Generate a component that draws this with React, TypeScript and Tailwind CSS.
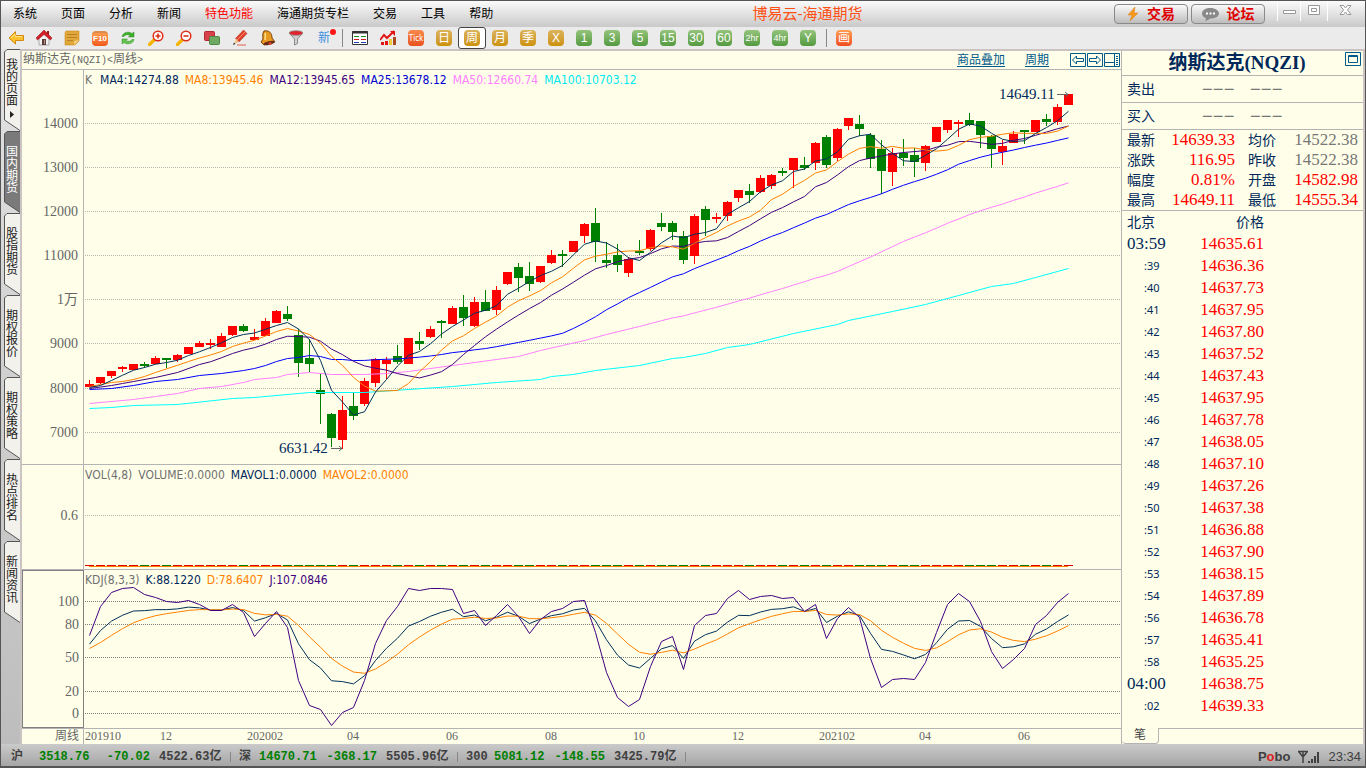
import React from "react"
import clsx from "clsx"

const BAR_STEP = 11
const FIRST_BAR = 5

type Candle = [string, number, number, number, number]
type Point = [number, number]

// direction, body top, body bottom, wick top, wick bottom
const candles: Candle[] = [
  ["u", 384, 387, 380, 387], ["u", 377, 383, 377, 384], ["u", 371, 376, 371, 378], ["u", 367, 369, 366, 372],
  ["u", 364, 370, 364, 370], ["d", 364, 366, 362, 368], ["u", 358, 364, 356, 364], ["d", 358, 360, 358, 368],
  ["u", 355, 360, 354, 362], ["u", 347, 354, 347, 354], ["u", 343, 347, 341, 347], ["u", 343, 344, 339, 349],
  ["u", 336, 347, 333, 347], ["u", 326, 335, 326, 336], ["d", 326, 331, 324, 332], ["u", 337, 340, 329, 340],
  ["u", 321, 336, 318, 336], ["u", 311, 323, 310, 323], ["d", 314, 319, 306, 321], ["d", 335, 363, 329, 377],
  ["d", 358, 364, 339, 372], ["d", 390, 394, 373, 424], ["d", 414, 438, 413, 447], ["u", 410, 440, 396, 449],
  ["d", 406, 416, 393, 420], ["u", 381, 404, 378, 406], ["u", 359, 383, 358, 387], ["u", 360, 364, 357, 379],
  ["d", 356, 362, 345, 364], ["u", 338, 364, 338, 364], ["d", 341, 344, 332, 350], ["u", 329, 337, 326, 338],
  ["d", 321, 323, 320, 338], ["u", 308, 324, 306, 324], ["d", 307, 318, 295, 326], ["u", 302, 326, 297, 327],
  ["d", 302, 311, 290, 311], ["u", 290, 310, 286, 315], ["u", 272, 284, 272, 285], ["d", 267, 278, 263, 292],
  ["d", 276, 284, 262, 291], ["u", 266, 282, 266, 283], ["u", 255, 263, 250, 264], ["d", 254, 255, 250, 267],
  ["u", 241, 252, 241, 252], ["u", 224, 236, 223, 243], ["d", 223, 242, 208, 262], ["d", 260, 263, 242, 268],
  ["d", 255, 265, 244, 272], ["u", 259, 273, 257, 277], ["d", 251, 253, 240, 255], ["u", 230, 249, 229, 251],
  ["d", 223, 227, 213, 231], ["d", 223, 232, 221, 240], ["d", 236, 260, 231, 264], ["u", 216, 256, 214, 264],
  ["d", 209, 220, 206, 236], ["u", 217, 219, 213, 223], ["u", 202, 216, 201, 221], ["u", 190, 198, 190, 202],
  ["d", 191, 195, 184, 203], ["u", 178, 192, 175, 193], ["u", 175, 186, 174, 189], ["d", 171, 173, 168, 176],
  ["u", 158, 170, 158, 188], ["d", 165, 168, 157, 170], ["u", 143, 163, 142, 170], ["d", 137, 165, 135, 168],
  ["u", 129, 158, 128, 161], ["u", 118, 126, 118, 130], ["d", 124, 129, 115, 136], ["d", 135, 159, 133, 168],
  ["d", 149, 171, 140, 194], ["u", 153, 172, 148, 186], ["d", 153, 158, 139, 166], ["d", 155, 162, 148, 177],
  ["u", 146, 163, 145, 171], ["u", 127, 142, 127, 142], ["u", 120, 130, 120, 133], ["u", 122, 124, 120, 137],
  ["d", 120, 125, 113, 126], ["d", 121, 135, 121, 148], ["d", 136, 149, 135, 168], ["u", 146, 152, 140, 165],
  ["u", 134, 143, 131, 143], ["d", 130, 132, 130, 144], ["u", 120, 132, 120, 132], ["d", 119, 122, 114, 126],
  ["u", 107, 122, 104, 125], ["u", 94, 105, 94, 105],
]

const ma4Lead: Point[] = [[0, 387], [1, 385], [2, 380]]
const ma8Lead: Point[] = [[0, 386], [1, 384], [2, 382], [3, 381], [4, 379], [5, 376], [6, 372]]
const ma12Lead: Point[] = [[0, 388], [2, 385], [3, 383], [4, 381], [6, 377], [8, 372], [10, 364]]
const ma25Lead: Point[] = [
  [0, 389], [2, 388], [4, 385], [6, 381], [8, 379], [10, 375], [12, 373], [14, 370], [15, 368], [16, 365],
  [17, 361], [18, 358], [19, 357], [20, 355], [21, 356], [22, 359], [23, 359],
]
const ma50Lead: Point[] = [
  [0, 403], [4, 399], [6, 396], [8, 393], [10, 388], [12, 386], [14, 382], [15, 379], [17, 377], [18, 374],
  [20, 372], [22, 374], [25, 374], [27, 373], [29, 371], [33, 365], [37, 359], [39, 356], [41, 350], [43, 345],
  [45, 340], [47, 334],
]
const ma100: Point[] = [
  [0, 408], [2, 407], [4, 405], [8, 404], [13, 398], [15, 397], [19, 393], [20, 392], [25, 392], [29, 389],
  [33, 386], [37, 382], [41, 379], [42, 376], [44, 374], [46, 370], [50, 365], [53, 358], [54, 357], [56, 353],
  [58, 347], [60, 344], [64, 333], [68, 324], [69, 320], [73, 311], [76, 304], [79, 295], [82, 286], [84, 283],
  [86, 277], [89, 268],
]

const jLine = [
  635, 606, 592, 588, 587, 594, 597, 601, 602, 600, 604, 610, 610, 604, 612, 636, 623, 611, 627, 680, 705, 709,
  725, 712, 707, 680, 643, 620, 606, 588, 590, 588, 588, 589, 613, 610, 625, 615, 604, 616, 633, 619, 611, 608,
  601, 600, 632, 672, 697, 706, 699, 666, 641, 636, 669, 625, 615, 613, 598, 590, 599, 596, 595, 598, 597, 611,
  604, 638, 618, 607, 617, 658, 687, 679, 678, 679, 662, 632, 604, 593, 601, 621, 651, 668, 659, 648, 624, 615,
  602, 593,
]

const closes = candles.map(([dir, top, bottom]) => (dir === "u" ? top : bottom))

function movingAverage(n: number, lead: Point[]): Point[] {
  const out = [...lead]
  for (let i = n - 1; i < closes.length; i++) {
    const sum = closes.slice(i - n + 1, i + 1).reduce((a, b) => a + b, 0)
    out.push([i, sum / n])
  }
  return out
}

// D = (6 * prevD + J) / 7, K = (J + 2D) / 3
function kdj() {
  const d: number[] = []
  jLine.forEach((j, i) => d.push(i === 0 ? 648 : (6 * d[i - 1] + j) / 7))
  const k = jLine.map((j, i) => (j + 2 * d[i]) / 3)
  return { k, d }
}

const barX = (i: number) => FIRST_BAR + i * BAR_STEP
const toPoints = (line: Point[]) => line.map(([i, y]) => `${barX(i) + 0.5},${y + 0.5}`).join(" ")
const indexed = (values: number[]): Point[] => values.map((y, i) => [i, y])

const averages = [
  { color: "#00ffff", line: ma100 },
  { color: "#ff80ff", line: movingAverage(50, ma50Lead) },
  { color: "#0000ff", line: movingAverage(25, ma25Lead) },
  { color: "#400080", line: movingAverage(12, ma12Lead) },
  { color: "#ff8000", line: movingAverage(8, ma8Lead) },
  { color: "#00305a", line: movingAverage(4, ma4Lead) },
]

const priceAxis: [number, string][] = [
  [123, "14000"], [167, "13000"], [211, "12000"], [255, "11000"], [299, "1万"], [343, "9000"], [388, "8000"], [432, "7000"],
]
const kdjAxis: [number, string][] = [[601, "100"], [624, "80"], [657, "50"], [691, "20"], [713, "0"]]
const months: [number, string][] = [
  [7, "12"], [16, "202002"], [24, "04"], [33, "06"], [42, "08"], [50, "10"], [59, "12"], [68, "202102"], [76, "04"], [85, "06"],
]

const menus = ["系统", "页面", "分析", "新闻", "特色功能", "海通期货专栏", "交易", "工具", "帮助"]
const sideTabs = ["我的页面", "国内期货", "股指期货", "期权报价", "期权策略", "热点排名", "新闻资讯"]

const quotes = [
  ["最新", "14639.33", "均价", "14522.38"],
  ["涨跌", "116.95", "昨收", "14522.38"],
  ["幅度", "0.81%", "开盘", "14582.98"],
  ["最高", "14649.11", "最低", "14555.34"],
]

const ticks = [
  ["03:59", "14635.61"], [":39", "14636.36"], [":40", "14637.73"], [":41", "14637.95"], [":42", "14637.80"],
  [":43", "14637.52"], [":44", "14637.43"], [":45", "14637.95"], [":46", "14637.78"], [":47", "14638.05"],
  [":48", "14637.10"], [":49", "14637.26"], [":50", "14637.38"], [":51", "14636.88"], [":52", "14637.90"],
  [":53", "14638.15"], [":54", "14637.89"], [":56", "14636.78"], [":57", "14635.41"], [":58", "14635.25"],
  ["04:00", "14638.75"], [":02", "14639.33"],
]

const Icon = ({ children }: { children: React.ReactNode }) => (
  <svg width="16" height="16" viewBox="0 0 16 16" aria-hidden="true">{children}</svg>
)

const icons: { label: string; icon: React.ReactNode }[] = [
  {
    label: "返回",
    icon: <Icon><path d="M7.500 1.500 1 8l6.500 6V10.500H15.500V5.500H7.500z" fill="#fdc02f" stroke="#d08a10" strokeWidth="1" /><path d="M3 8l4-4v2.500h7" fill="none" stroke="#ffe68a" /></Icon>,
  },
  {
    label: "首页",
    icon: (
      <Icon>
        <path d="M3 8v7h10V8L8 3z" fill="#f2f2f2" stroke="#a9a9a9" />
        <path d="M11 1h2v4h-2z" fill="#a01818" />
        <path d="M8 0 0 8l1.500 2L8 4.500 14.500 10 16 8z" fill="#d3202a" stroke="#8c1016" strokeWidth=".5" />
        <path d="M6 9h4v6H6z" fill="#5b3f3f" />
        <path d="M8 10h1v4H8z" fill="#b98d7b" />
      </Icon>
    ),
  },
  {
    label: "便签",
    icon: (
      <Icon>
        <path d="M2 1h13v10l-4 4H1V3z" fill="#e2a73a" stroke="#c98a1c" strokeWidth=".6" />
        <path d="M3 4.500h10M3 7.500h10M3 10.500h6" stroke="#b98028" />
        <path d="M15 10l-5 5 .5-4z" fill="#f7d486" />
      </Icon>
    ),
  },
  { label: "F10", icon: <span className="block h-[15px] w-4 rounded-sm border-t-2 border-[#d98c4e] bg-gradient-to-b from-[#ff9a4a] to-[#f0591c] text-center text-[8px] font-bold leading-3 text-white">F10</span> },
  {
    label: "刷新",
    icon: (
      <Icon>
        <path d="M2 6.500C3 2 9 1 12 3.500L14 2v5H8.500L10 5.500C8 4 5 4.500 4 6.500z" fill="#3fae2c" stroke="#2b8a1c" strokeWidth=".5" />
        <path d="M14 9.500C13 14 7 15 4 12.500L2 14V9h5.500L6 10.500C8 12 11 11.500 12 9.500z" fill="#63c64c" stroke="#2b8a1c" strokeWidth=".5" />
      </Icon>
    ),
  },
  {
    label: "放大",
    icon: (
      <Icon>
        <path d="M1.500 14.500 6 10" stroke="#f4b400" strokeWidth="3.200" strokeLinecap="round" />
        <circle cx="10" cy="6" r="4.800" fill="#fff" stroke="#dc3018" strokeWidth="1.500" />
        <path d="M7.500 6h5M10 3.500v5" stroke="#dc3018" strokeWidth="1.600" />
      </Icon>
    ),
  },
  {
    label: "缩小",
    icon: (
      <Icon>
        <path d="M1.500 14.500 6 10" stroke="#f4b400" strokeWidth="3.200" strokeLinecap="round" />
        <circle cx="10" cy="6" r="4.800" fill="#fff" stroke="#dc3018" strokeWidth="1.500" />
        <path d="M7.500 6h5" stroke="#dc3018" strokeWidth="1.600" />
      </Icon>
    ),
  },
  {
    label: "叠加",
    icon: <Icon><rect x=".5" y="1.500" width="10" height="9" rx="1" fill="#d8404a" stroke="#b02830" /><rect x="5.500" y="6.500" width="10" height="8" rx="1" fill="#6faa64" stroke="#4d8843" /></Icon>,
  },
  {
    label: "画线",
    icon: (
      <Icon>
        <path d="M11.500 0 15 3.500 7 12 3.500 8.500z" fill="#e0402a" stroke="#a82a1a" strokeWidth=".5" />
        <path d="M13 2 5 10" stroke="#ff8f78" />
        <path d="M4 9l3 3-5 2z" fill="#f1c58a" />
        <path d="M2 12.500 1 15l2.500-1z" fill="#333" />
        <path d="M5 15h9" stroke="#e0604a" />
      </Icon>
    ),
  },
  {
    label: "预警",
    icon: (
      <Icon>
        <path d="M4 1c5-1 8 2 8 7l3 4-11 3-3-3 2-3C3 6 2 4 4 1z" fill="#e79a20" stroke="#7c4310" />
        <path d="M5 3c1 2 0 5 0 7" stroke="#ffe08a" strokeWidth="1.500" fill="none" />
        <ellipse cx="9" cy="13" rx="5.500" ry="1.800" fill="#6b2a18" transform="rotate(-14 9 13)" />
        <circle cx="10" cy="13.500" r="1.500" fill="#d6452a" />
      </Icon>
    ),
  },
  {
    label: "筛选",
    icon: (
      <Icon>
        <path d="M1.500 3.500 6.500 9v6l3-1.500V9l5-5.500z" fill="#cfcfcf" stroke="#777" strokeWidth=".8" />
        <ellipse cx="8" cy="3" rx="6.800" ry="2.300" fill="#e2222c" stroke="#888" strokeWidth=".8" />
      </Icon>
    ),
  },
  {
    label: "新",
    icon: (
      <span className="relative block w-4 text-[12px] leading-4 text-[#3c8fe0]">
        新<i className="absolute -right-1 -top-px size-[6px] rounded-full bg-[#ff1616]" />
      </span>
    ),
  },
]

const reportIcon = (
  <Icon>
    <path d="M.5 1.500h15v13H.5z" fill="#fff" stroke="#333" />
    <path d="M0 2.500h16" stroke="#333" strokeWidth="2" />
    <path d="M2 6.500h5M9 6.500h5" stroke="#1a8f1a" />
    <path d="M2 9.500h5M9 9.500h5" stroke="#d01818" />
    <path d="M2 12.500h5M9 12.500h5" stroke="#1b3fb0" />
  </Icon>
)

const trendIcon = (
  <Icon>
    <path d="M0 10 4 5l3 3 7-7" fill="none" stroke="#e21414" strokeWidth="2" />
    <path d="M10 1h5v5z" fill="#e21414" />
    <path d="M1 12h3v3H1zM5 11h3v4H5z" fill="#e21414" /><path d="M9 9h3v6H9z" fill="#f3c63c" /><path d="M13 7h3v8h-3z" fill="#a84a1c" />
  </Icon>
)

const goldPeriods = ["日", "周", "月", "季", "X"]
const greenPeriods = ["1", "3", "5", "15", "30", "60", "2hr", "4hr", "Y"]

const toolButton = "flex h-[22px] w-7 shrink-0 items-center justify-center"
const chip = "block h-4 w-4 rounded-sm text-center leading-4 text-white"

function Toolbar() {
  return (
    <div className="flex h-[22px] items-center bg-[#ebebeb] pl-px">
      {icons.map(({ label, icon }) => (
        <button key={label} type="button" aria-label={label} className={toolButton}>{icon}</button>
      ))}
      <span className="flex w-2 justify-center"><i className="h-[18px] w-px bg-[#888]" /></span>
      <button type="button" aria-label="报价" className={toolButton}>{reportIcon}</button>
      <button type="button" aria-label="走势" className={toolButton}>{trendIcon}</button>
      <button type="button" className={toolButton}>
        <span className={clsx(chip, "bg-gradient-to-b from-[#f88a4c] to-[#e8501c] font-['Noto_Sans'] text-[8px]")}>Tick</span>
      </button>
      {goldPeriods.map((p) => (
        <button
          key={p}
          type="button"
          className={clsx(toolButton, p === "周" && "rounded-[3px] border border-[#444] bg-white")}
        >
          <span className={clsx(chip, "bg-gradient-to-b from-[#dcb45a] to-[#cc9200] text-[12px]")}>{p}</span>
        </button>
      ))}
      {greenPeriods.map((p) => (
        <button key={p} type="button" className={toolButton}>
          <span className={clsx(chip, "bg-gradient-to-b from-[#94c47c] to-[#549a40]", p.length > 2 ? "text-[9px]" : "text-[12px]")}>{p}</span>
        </button>
      ))}
      <span className="flex w-2 justify-center"><i className="h-[18px] w-px bg-[#888]" /></span>
      <button type="button" className={toolButton}>
        <span className={clsx(chip, "bg-gradient-to-b from-[#ffa054] to-[#f04a20] text-[12px]")}>画</span>
      </button>
    </div>
  )
}

const pill = "flex h-5 w-[74px] items-center justify-center gap-2 rounded border border-[#8a8a8a] bg-gradient-to-b from-[#fafafa] to-[#bdbdbd] text-[14px] font-bold leading-4 text-[#e00000]"

function TitleBar() {
  return (
    <header className="flex h-[26px] items-center bg-gradient-to-b from-[#fbfbfb] to-[#c9c9c9] pl-3">
      <nav className="flex gap-6 text-[12px] leading-5">
        {menus.map((m) => (
          <button key={m} type="button" className={m === "特色功能" ? "text-[#ff0000]" : "text-black"}>{m}</button>
        ))}
      </nav>
      <h1 className="flex-1 pl-2 text-center text-[15px] leading-5 text-[#ff5014]">博易云-海通期货</h1>
      <div className="flex gap-[3px]">
        <button type="button" className={pill}>
          <svg width="12" height="16" viewBox="0 0 12 16" aria-hidden="true"><path d="M8 1 1 9h4l-2 6 8-8H7z" fill="#f59a1c" stroke="#e07a10" strokeWidth=".5" /></svg>
          交易
        </button>
        <button type="button" className={pill}>
          <svg width="17" height="16" viewBox="0 0 17 16" aria-hidden="true">
            <path d="M8.500 2C4 2 0 4 0 7.500 0 10 2 11.500 4 12c0 1-.5 2-1 3 2-.5 4-1.500 5-2.500 5 0 9-2 9-5S13 2 8.500 2z" fill="#888" />
            <path d="M4 7.500h2M7.500 7.500h2M11 7.500h2" stroke="#fff" strokeWidth="2" />
          </svg>
          论坛
        </button>
      </div>
      <div className="ml-3 flex h-full items-start text-[#999]">
        <button type="button" aria-label="最小化" className="h-5 w-6 border-x border-white">
          <svg width="22" height="18" aria-hidden="true"><path d="M5.500 8.500h12v3h-12z" fill="#fff" stroke="currentColor" /></svg>
        </button>
        <button type="button" aria-label="最大化" className="h-5 w-[27px] border-r border-white">
          <svg width="26" height="18" aria-hidden="true"><path d="M7.500 3.500h11v9h-11zM10.500 6.500h5v3h-5z" fill="#fff" stroke="currentColor" /></svg>
        </button>
        <button type="button" aria-label="关闭" className="h-5 w-[37px]">
          <svg width="36" height="18" aria-hidden="true"><path d="M12 3.500h3.500L17.500 6l2-2.500H23L19.500 8l3.500 4.500h-3.500l-2-2.500-2 2.500H12L15.500 8z" fill="#fff" stroke="currentColor" /></svg>
        </button>
      </div>
    </header>
  )
}

function SideTabs() {
  return (
    <aside className="flex w-[19px] shrink-0 flex-col bg-gradient-to-b from-[#e2e2e2] to-[#bdbdbd] pl-[3px]">
      {sideTabs.map((t, i) => {
        const active = t === "国内期货"
        return (
          <button
            key={t}
            type="button"
            className={clsx("relative flex h-[82px] w-4 shrink-0 flex-col items-center text-[12px] leading-3", i === 0 ? "pt-[10px]" : "pt-[15px]", active ? "text-white" : "text-[#222]")}
          >
            <svg className="absolute inset-0" width="16" height="82" aria-hidden="true">
              <path d="M16 .5H3L.5 3v68L16 81.500" fill={active ? "#7a7a7a" : "#f2f1ec"} stroke="#555" />
            </svg>
            {[...t].map((c) => <span key={c} className="relative">{c}</span>)}
            {i === 0 && (
              <svg className="relative mt-1" width="4" height="7" aria-hidden="true"><path d="M0 0l4 3.500L0 7z" fill="#222" /></svg>
            )}
          </button>
        )
      })}
    </aside>
  )
}

function Axis({ labels, top }: { labels: [number, string][]; top: number }) {
  return (
    <svg className="h-full w-full font-['Liberation_Serif','Noto_Sans_CJK_SC',serif]" fill="#666" fontSize="14" textAnchor="end">
      {labels.map(([y, t]) => <text key={t} x="56" y={y - top + 5}>{t}</text>)}
    </svg>
  )
}

function GridLines({ labels, color }: { labels: [number, string][]; color: string }) {
  return (
    <g stroke={color} strokeDasharray="1 1" shapeRendering="crispEdges">
      {labels.map(([y]) => <line key={y} x1="1" x2="100%" y1={y + 0.5} y2={y + 0.5} />)}
    </g>
  )
}

function Legend({ items }: { items: [string, string][] }) {
  return (
    <div className="absolute left-px top-[2px] flex gap-[6px] whitespace-nowrap font-['DejaVu_Sans_Condensed','DejaVu_Sans',sans-serif] text-[12px] leading-4">
      {items.map(([t, color]) => <span key={t} className={color}>{t}</span>)}
    </div>
  )
}

const axisCell = "w-[62px] shrink-0 border-r border-[#b4b4b4]"
const note = "font-['Liberation_Serif',serif]"

function PricePanel() {
  return (
    <section className="flex min-h-[394px] flex-1 border-b border-[#b4b4b4]">
      <div className={axisCell}><Axis labels={priceAxis} top={70} /></div>
      <div className="relative flex-1 overflow-hidden">
        <svg className="absolute inset-0 h-full w-full">
          <g transform="translate(0 -70)">
            <GridLines labels={priceAxis} color="#b8b8b0" />
            {candles.map(([dir, top, bottom, high, low], i) => (
              <g key={i} fill={dir === "u" ? "#ff0000" : "#008000"} shapeRendering="crispEdges">
                <rect x={barX(i)} y={high} width="1" height={low - high} />
                <rect x={barX(i) - 4} y={top} width="9" height={Math.max(bottom - top, 2)} />
              </g>
            ))}
            {averages.map(({ color, line }) => (
              <polyline key={color} points={toPoints(line)} fill="none" stroke={color} />
            ))}
            <g className={note} fontSize="15" fill="#00285a">
              <text x="195" y="453">6631.42</text>
              <text x="915" y="99">14649.11</text>
            </g>
            <g stroke="#666" fill="none">
              <path d="M247 448.500h11M255 446l3 2.500-3 2.500" />
              <path d="M973 94.500h11M981 92l3 2.500-3 2.500" />
            </g>
          </g>
        </svg>
        <Legend
          items={[
            ["K", "text-[#707070] mr-[2px]"],
            ["MA4:14274.88", "text-[#00285a]"],
            ["MA8:13945.46", "text-[#ff8000]"],
            ["MA12:13945.65", "text-[#400080]"],
            ["MA25:13678.12", "text-[#0000d0]"],
            ["MA50:12660.74", "text-[#ff80ff]"],
            ["MA100:10703.12", "text-[#00e8f0]"],
          ]}
        />
      </div>
    </section>
  )
}

function VolumePanel() {
  const end = barX(candles.length - 1)
  return (
    <section className="flex h-[105px] shrink-0 border-b border-[#b4b4b4]">
      <div className={axisCell}><Axis labels={[[515, "0.6"]]} top={465} /></div>
      <div className="relative flex-1 overflow-hidden">
        <svg className="absolute inset-0 h-full w-full" shapeRendering="crispEdges">
          <g transform="translate(0 -465)">
            <GridLines labels={[[515, "0.6"]]} color="#b8b8b0" />
            {candles.map(([dir], i) => (
              <rect key={i} x={barX(i) - 4} y="565" width="9" height="1" fill={dir === "u" ? "#e00000" : "#008000"} />
            ))}
            <rect x={FIRST_BAR} y="566" width={end - FIRST_BAR} height="1" fill="#ff8000" />
          </g>
        </svg>
        <Legend
          items={[
            ["VOL(4,8)", "text-[#707070]"],
            ["VOLUME:0.0000", "text-[#707070]"],
            ["MAVOL1:0.0000", "text-[#00285a]"],
            ["MAVOL2:0.0000", "text-[#ff8000]"],
          ]}
        />
      </div>
    </section>
  )
}

function KdjPanel() {
  const { k, d } = kdj()
  return (
    <section className="flex h-[159px] shrink-0 border-b border-[#b4b4b4]">
      <div className="w-[62px] shrink-0 border border-[#808080]"><Axis labels={kdjAxis} top={571} /></div>
      <div className="relative flex-1 overflow-hidden">
        <svg className="absolute inset-0 h-full w-full">
          <g transform="translate(0 -570)">
            <GridLines labels={kdjAxis} color="#808080" />
            <polyline points={toPoints(indexed(k))} fill="none" stroke="#00305a" />
            <polyline points={toPoints(indexed(d))} fill="none" stroke="#ff8000" />
            <polyline points={toPoints(indexed(jLine))} fill="none" stroke="#400080" />
          </g>
        </svg>
        <Legend
          items={[
            ["KDJ(8,3,3)", "text-[#707070]"],
            ["K:88.1220", "text-[#00285a]"],
            ["D:78.6407", "text-[#ff8000]"],
            ["J:107.0846", "text-[#400080]"],
          ]}
        />
      </div>
    </section>
  )
}

function TimeAxis() {
  return (
    <div className="flex h-[15px] shrink-0 text-[12px] leading-[14px] text-[#666]">
      <div className={clsx(axisCell, "pr-1 text-right")}>周线</div>
      <svg className={clsx("h-full flex-1", note)} fontSize="12" fill="#666" textAnchor="middle">
        <text x="1" y="11" textAnchor="start">201910</text>
        {months.map(([i, t]) => <text key={i} x={barX(i)} y="11">{t}</text>)}
      </svg>
    </div>
  )
}

const code = "font-['Liberation_Mono',monospace] text-[10px]"

function ChartArea() {
  return (
    <main className="flex min-w-0 flex-1 flex-col">
      <div className="flex h-[19px] shrink-0 items-center border-b border-[#b4b4b4] pl-px text-[12px] leading-4 text-[#666]">
        <span>纳斯达克<span className={code}>(NQZI)&lt;</span>周线<span className={code}>&gt;</span></span>
        <div className="ml-auto flex items-center text-[#005a8c]">
          <a href="#overlay" className="mr-5 underline underline-offset-2">商品叠加</a>
          <a href="#period" className="mr-[21px] underline underline-offset-2">周期</a>
          <button type="button" aria-label="左移">
            <svg width="17" height="16" fill="none" stroke="currentColor"><path d="M.5 1.500h15v13H.5z" /><path d="M2.500 8l4-4v2.500h7v3h-7V12z" /></svg>
          </button>
          <button type="button" aria-label="右移">
            <svg width="17" height="16" fill="none" stroke="currentColor"><path d="M.5 1.500h15v13H.5z" /><path d="M13.500 8l-4-4v2.500h-7v3h7V12z" /></svg>
          </button>
          <button type="button" aria-label="布局">
            <svg width="17" height="16" fill="none" stroke="currentColor"><path d="M.5 1.500h15v13H.5zM10.500 1.500v13M.5 10.500h10M12 4.500h2M12 6.500h2M12 8.500h2M12 10.500h2M12 12.500h2" /></svg>
          </button>
        </div>
      </div>
      <PricePanel />
      <VolumePanel />
      <KdjPanel />
      <TimeAxis />
    </main>
  )
}

const figure = "text-right font-['Liberation_Serif',serif] text-[17px]"
const label = "text-left text-[14px] font-normal text-[#00285a]"

function QuotePanel() {
  return (
    <section className="flex w-[242px] shrink-0 flex-col border-l border-[#b4b4b4]">
      <div className="relative flex h-[25px] shrink-0 items-center justify-center border-b border-[#b4b4b4] pr-[11px]">
        <h2 className="font-['Liberation_Serif','Noto_Sans_CJK_SC',serif] text-[19px] font-bold leading-6 text-[#00285a]">纳斯达克(NQZI)</h2>
        <button type="button" aria-label="最大化面板" className="absolute right-[2px] top-[1px] text-[#005a8c]">
          <svg width="16" height="14" fill="none" stroke="currentColor"><path d="M.5.5h15v13H.5zM3.500 3.500h9v7h-9zM3.500 4.500h9" /></svg>
        </button>
      </div>
      {["卖出", "买入"].map((side) => (
        <div key={side} className="flex h-[27px] shrink-0 items-center border-b border-[#b4b4b4] pl-[5px] text-[14px] text-[#00285a]">
          <span className="w-[75px]">{side}</span>
          <span className="w-12 font-['Noto_Sans'] text-[19px] leading-5 text-[#777]">−−−</span>
          <span className="font-['Noto_Sans'] text-[19px] leading-5 text-[#777]">−−−</span>
        </div>
      ))}
      <table className="w-full table-fixed border-b border-[#b4b4b4] leading-5">
        <tbody>
          {quotes.map(([l1, v1, l2, v2], i) => (
            <tr key={l1} className="h-5">
              <th scope="row" className={clsx(label, "w-[33px] p-0 pl-[5px]")}>{l1}</th>
              <td className={clsx(figure, "w-[93px] p-0 pr-[13px] text-[#ff0000]")}>{v1}</td>
              <th scope="row" className={clsx(label, "w-7 p-0")}>{l2}</th>
              <td className={clsx(figure, "p-0 pr-[5px]", i < 2 ? "text-[#777]" : "text-[#ff0000]")}>{v2}</td>
            </tr>
          ))}
        </tbody>
      </table>
      <table className="w-[142px] table-fixed leading-[22px]">
        <thead>
          <tr className="h-[22px]">
            <th scope="col" className={clsx(label, "w-[45px] p-0 pl-[5px]")}>北京</th>
            <th scope="col" className={clsx(label, "p-0 !text-right")}>价格</th>
          </tr>
        </thead>
        <tbody>
          {ticks.map(([time, price]) => (
            <tr key={time} className="h-[22px]">
              <td className="p-0 pl-[5px] text-[#00285a]">
                {time.length > 3 ? (
                  <span className="font-['Liberation_Serif',serif] text-[17px]">{time}</span>
                ) : (
                  <span className="block pl-[17px] font-['Noto_Sans'] text-[11px]">{time}</span>
                )}
              </td>
              <td className={clsx(figure, "p-0 text-[#ff0000]")}>{price}</td>
            </tr>
          ))}
        </tbody>
      </table>
      <div className="mt-auto flex h-4 shrink-0">
        <button type="button" className="h-4 w-[37px] rounded-b-[4px] border-b border-r border-[#b4b4b4] text-[12px] leading-[15px] text-[#444]">笔</button>
        <span className="flex-1 border-t border-[#b4b4b4]" />
      </div>
    </section>
  )
}

const indices = [
  { name: "沪", last: "3518.76", change: "-70.02", amount: "4522.63亿", nameWidth: "w-7", lastWidth: "w-[49px]" },
  { name: "深", last: "14670.71", change: "-368.17", amount: "5505.96亿", nameWidth: "w-5", lastWidth: "w-14" },
  { name: "300", last: "5081.12", change: "-148.55", amount: "3425.79亿", nameWidth: "w-7", lastWidth: "w-[49px]" },
]

function StatusBar() {
  return (
    <footer className="flex h-[22px] shrink-0 items-center bg-gradient-to-b from-[#cacaca] to-[#a6a6a6] pl-[10px] pr-1 pt-[3px] font-['Liberation_Mono','Noto_Sans_CJK_SC',monospace] text-[12px] font-bold leading-[18px] text-[#404040]">
      {indices.map(({ name, last, change, amount, nameWidth, lastWidth }) => (
        <div key={name} className="flex items-center">
          <span className={nameWidth}>{name}</span>
          <span className={clsx(lastWidth, "text-[#008000]")}>{last}</span>
          <span className="w-[62px] text-right text-[#008000]">{change}</span>
          <span className="ml-[9px] w-[71px]">{amount}</span>
          <span className="mr-2 h-[10px] w-px bg-[#888]" />
        </div>
      ))}
      <span className="ml-auto font-['Liberation_Sans',sans-serif] text-[13px]">P<span className="text-[#e02020]">o</span>bo</span>
      <svg className="ml-2" width="22" height="14" viewBox="0 0 22 14" fill="none" stroke="#404040" aria-hidden="true">
        <path d="M0 1.500h10M1 2l4 5 4-5M5 2v11" strokeWidth="1.500" />
        <path d="M11 13v-2M14 13V9M17 13V6M20 13V2" strokeWidth="2" />
      </svg>
      <time className="ml-2 font-['Liberation_Sans',sans-serif] text-[13px] font-normal">23:34</time>
    </footer>
  )
}

export default function App() {
  return (
    <div className="flex min-h-screen w-full flex-col border border-b-2 border-[#555] bg-[#ebebeb] font-['Liberation_Sans','Noto_Sans_CJK_SC',sans-serif]">
      <TitleBar />
      <Toolbar />
      <div className="flex flex-1">
        <SideTabs />
        <div className="flex min-w-0 flex-1 border-x-2 border-t-2 border-[#cbc2c2] bg-[#ffffe9]">
          <ChartArea />
          <QuotePanel />
        </div>
      </div>
      <StatusBar />
    </div>
  )
}
